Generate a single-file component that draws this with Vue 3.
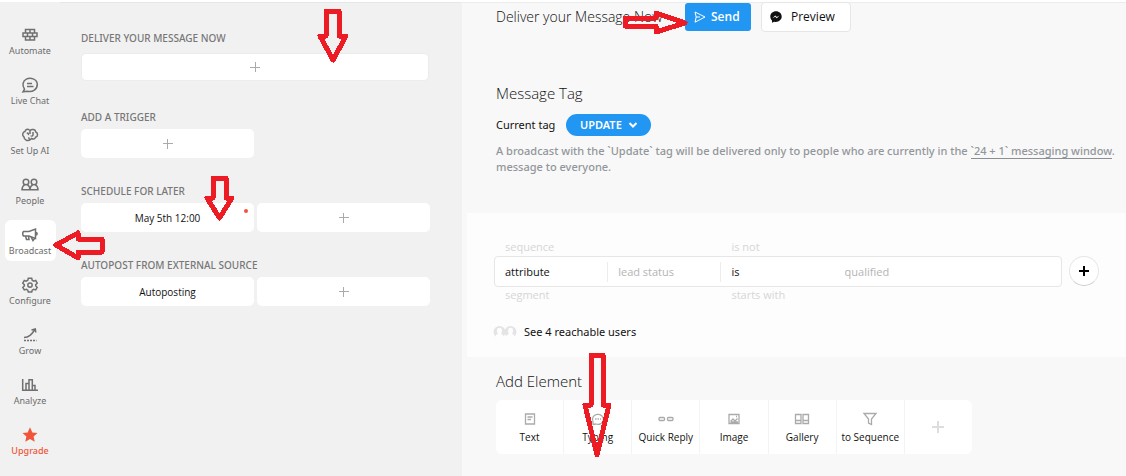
<script setup>
import { ref } from 'vue'

const nav = ['Automate', 'Live Chat', 'Set Up AI', 'People', 'Broadcast', 'Configure', 'Grow', 'Analyze', 'Upgrade']
const active = ref('Broadcast')
const elements = ['Text', 'Typing', 'Quick Reply', 'Image', 'Gallery', 'to Sequence']
const leadStatus = ref('')
const statusValue = ref('')
const arrows = [
  'M326 11H339V36H346L333 60L320 36H326Z',
  'M213 178H226V198H232L219.500 218L207 198H213Z',
  'M102 239V252H78V258L56 245L78 233V239Z',
  'M625 18H656V13L685 23L656 32V26H625Z',
  'M591 355H603V405H609L597 455L585 405H591Z'
]
</script>

<template>
  <div class="app">
    <nav class="sidebar">
      <a
        v-for="item in nav"
        :key="item"
        href="#"
        class="nav-item"
        :class="{ active: item === active, upgrade: item === 'Upgrade' }"
        @click.prevent="active = item"
      >
        <svg class="nav-icon" viewBox="0 0 18 18" aria-hidden="true">
          <g v-if="item === 'Automate'">
            <path d="M4.500 3.500H13.500V7H4.500ZM2 7H16V10.500H2ZM4.500 10.500H13.500V14H4.500ZM9 3.500V7M6.500 7V10.500M11.500 7V10.500M9 10.500V14" />
          </g>
          <g v-else-if="item === 'Live Chat'">
            <path d="M2 15.800L3.500 13.200C.8 9.500 1.800 5 5.300 3.200C9.500 1 15.800 3 16.300 8C16.500 13.500 11.500 16.500 6.500 15.300Z" /><path d="M6 7.500H11M6 10.500H12.500" />
          </g>
          <g v-else-if="item === 'Set Up AI'">
            <path d="M8.500 4C6.500 2.500 4.300 3.500 4 5.500C1.500 6 .8 9.500 3 11C3 14 7 15.800 9.500 13.500L10.500 12.500C12.500 13.800 14.500 12.500 14.500 11.300C17.300 10.500 17 6.800 14.800 6C14.500 3.500 11 2.500 9 4.500V8M5.800 7.500C7 6.500 8 7.800 7.200 9M12 6V9C12 10.500 10 10 10 9.500M9.500 13.500C8.500 13.500 7.500 12.500 8 11.300" />
          </g>
          <g v-else-if="item === 'People'">
            <circle cx="5" cy="6" r="2.8" /><circle cx="13" cy="6" r="2.8" />
            <path d="M3.800 8.600C1.800 9.800 1 11 1 13.800H9C9 11 8.200 9.800 6.200 8.600M11.800 8.600C9.800 9.800 9 11 9 13.800H17C17 11 16.200 9.800 14.200 8.600" />
          </g>
          <g v-else-if="item === 'Broadcast'">
            <path d="M2.500 5.500H8L14.500 3V12.500L8 10H2.500L1.800 9V6.500ZM4.500 10L5.500 13.500H8L7.500 10M15 6.500C16.500 6.500 16.500 9 15 9M10 10.800L12 14.500L13.500 12.500" />
          </g>
          <g v-else-if="item === 'Configure'">
            <path d="M7.300 2.200H10.700L11.200 4.200L12.800 5.100L14.700 4.500L16.200 7.200L14.700 8.600V10L16.200 11.300L14.700 13.900L12.700 13.300L11.200 14.200L10.700 16H7.300L6.800 14.200L5.300 13.300L3.300 13.900L1.800 11.300L3.300 10V8.600L1.800 7.200L3.300 4.500L5.200 5.100L6.800 4.200Z" /><circle cx="9" cy="9.100" r="2.200" />
          </g>
          <g v-else-if="item === 'Grow'">
            <path d="M3 11.500C8 11.500 10.500 8.500 14 3.500M10.500 4L14.300 3L14.800 6.500" /><path d="M3 14.500H15.500" stroke-dasharray="2 1" />
          </g>
          <g v-else-if="item === 'Analyze'">
            <path d="M1.700 3V14.300H17M5 14V7.500H8V14M8 14V3.700H11.300V14M11.300 9.500H14V14" />
          </g>
          <path v-else class="solid" d="M9 1.300L11.300 6.400L16.500 6.900L12.600 10.500L13.700 15.700L9 13L4.300 15.700L5.400 10.500L1.500 6.900L6.700 6.400Z" />
        </svg>
        <span>{{ item }}</span>
      </a>
    </nav>

    <aside class="panel">
      <section class="group first">
        <h2>DELIVER YOUR MESSAGE NOW</h2>
        <div class="tiles single">
          <button class="tile" aria-label="Add broadcast"><i class="plus"></i></button>
        </div>
      </section>
      <section class="group">
        <h2>ADD A TRIGGER</h2>
        <div class="tiles">
          <button class="tile" aria-label="Add trigger"><i class="plus"></i></button>
        </div>
      </section>
      <section class="group">
        <h2>SCHEDULE FOR LATER</h2>
        <div class="tiles">
          <button class="tile">May 5th 12:00<i class="dot"></i></button>
          <button class="tile" aria-label="Add schedule"><i class="plus"></i></button>
        </div>
      </section>
      <section class="group">
        <h2>AUTOPOST FROM EXTERNAL SOURCE</h2>
        <div class="tiles">
          <button class="tile">Autoposting</button>
          <button class="tile" aria-label="Add autopost"><i class="plus"></i></button>
        </div>
      </section>
    </aside>

    <main class="main">
      <header class="head">
        <h1>Deliver your Message Now</h1>
        <button class="send">
          <svg viewBox="0 0 12 12" aria-hidden="true"><path d="M1 1L11 6L1 11.200L2.200 6ZM2.200 6H6" /></svg>
          Send
        </button>
        <button class="preview">
          <svg viewBox="0 0 12 12" aria-hidden="true">
            <path fill="#111" d="M6 .3C2.700.3.3 2.600.3 5.600C.3 7.300 1 8.600 2 9.500V11.800L4.200 10.700C7.800 11.700 11.700 9.300 11.700 5.600C11.700 2.600 9.300.3 6 .3Z" />
            <path d="M2.500 7.200L5.200 4.500L6.800 6.100L9.500 4.500L6.800 7.300L5.200 5.800Z" fill="#fff" />
          </svg>
          Preview
        </button>
      </header>

      <section class="tag">
        <h1>Message Tag</h1>
        <div class="tag-row">
          <span id="tag-label">Current tag</span>
          <button class="pill" aria-describedby="tag-label">
            UPDATE
            <svg viewBox="0 0 10 8" aria-hidden="true"><path d="M1.500 2L5 5.500L8.500 2" /></svg>
          </button>
        </div>
        <p>A broadcast with the `Update` tag will be delivered only to people who are currently in the <a href="#">`24 + 1` messaging window</a>.<br />message to everyone.</p>
      </section>

      <section class="filter">
        <div class="wheel-row ghost">
          <span>sequence</span><span></span><span>is not</span>
        </div>
        <div class="rule">
          <div class="wheel-row box">
            <button class="cell">attribute</button>
            <input v-model="leadStatus" class="cell" placeholder="lead status" aria-label="Attribute name" />
            <button class="cell">is</button>
            <input v-model="statusValue" class="cell plain" placeholder="qualified" aria-label="Attribute value" />
          </div>
          <button class="add" aria-label="Add condition"><i class="plus"></i></button>
        </div>
        <div class="wheel-row ghost">
          <span>segment</span><span></span><span>starts with</span>
        </div>
        <a href="#" class="reach">
          <svg viewBox="0 0 24 14" aria-hidden="true">
            <g v-for="x in [0, 11]" :key="x" :transform="`translate(${x})`">
              <circle cx="6.500" cy="7" r="6" fill="#e4e4e4" />
              <path d="M4 5.500A2.500 2.800 0 0 1 9 5.500C9 7.500 8.500 8.500 8 9C10 9.700 11 10.600 11 13.500H2C2 10.600 3 9.700 5 9C4.500 8.500 4 7.500 4 5.500Z" fill="#fdfdfd" />
            </g>
          </svg>
          See 4 reachable users
        </a>
      </section>

      <section class="add-element">
        <h1>Add Element</h1>
        <div class="cards">
          <button v-for="name in elements" :key="name" class="card">
            <svg viewBox="0 0 16 14" aria-hidden="true">
              <path v-if="name === 'Text'" d="M3.500 2H12.500V12H3.500ZM5.500 5H10.500M5.500 7.500H9" />
              <g v-else-if="name === 'Typing'"><path d="M3 12.500V9.500A5.500 5 0 1 1 6 12Z" /><path d="M5 7H11" stroke-dasharray="1.500 1" /></g>
              <g v-else-if="name === 'Quick Reply'"><rect x="1" y="5.500" width="5.500" height="3" rx="1" /><rect x="9.500" y="5.500" width="5.500" height="3" rx="1" /></g>
              <path v-else-if="name === 'Image'" d="M3 2.500H13V11.500H3ZM4.500 9.500L7 7L9 9L11.500 6.500M4.500 10H12M10 4.500H11" />
              <path v-else-if="name === 'Gallery'" d="M1.500 2.500H7V11.500H1.500ZM1.500 8.500H7M9 2.500H14.500V11.500H9ZM9 8.500H14.500" />
              <path v-else d="M2 1.500H14L9.500 7V12.500L6.500 11V7Z" />
            </svg>
            <span>{{ name }}</span>
          </button>
          <button class="card" aria-label="More elements"><i class="plus"></i></button>
        </div>
      </section>
    </main>

    <svg class="annotations" aria-hidden="true">
      <path v-for="d in arrows" :key="d" :d="d" />
    </svg>
  </div>
</template>

<style>
body { margin: 0; background: #f8f8f8; }
</style>

<style scoped>
* { box-sizing: border-box; }
.app {
  position: relative;
  display: flex;
  min-height: 100vh;
  overflow: hidden;
  border-top: 2px solid #fff;
  background: #f8f8f8;
  color: #111;
  font: 12px/16px "Open Sans", "Noto Sans", sans-serif;
}
button, input { font: inherit; color: inherit; border: 0; padding: 0; margin: 0; background: none; }
button { cursor: pointer; }
a { color: inherit; text-decoration: none; }
h1, h2, p { margin: 0; }
h1 { font-size: 15px; line-height: 20px; font-weight: 300; white-space: nowrap; }

.sidebar {
  flex: 0 0 60px;
  display: flex;
  flex-direction: column;
  align-items: center;
  gap: 9px;
  padding-top: 18px;
  background: #f1f1f1;
}
.nav-item {
  display: flex;
  flex-direction: column;
  align-items: center;
  width: 51px;
  height: 41px;
  padding-top: 6px;
  border-radius: 6px;
  color: #6c6c6c;
  font: 9px/14px "Noto Sans", sans-serif;
  white-space: nowrap;
}
.nav-icon { width: 18px; height: 18px; fill: none; stroke: #707070; stroke-width: 1.5; }
.active { background: #fff; }
.upgrade { color: #f0553a; font-weight: 500; }
.solid { fill: #f0553a; stroke: none; }

.panel {
  flex: 0 0 401px;
  padding: 28px 31px 0 21px;
  border-top: 1px solid #e6e6e6;
  background: #f1f1f1;
}
.group { margin-bottom: 26px; }
.group.first { margin-bottom: 29px; }
h2 { margin-bottom: 5px; font: 500 10px/14px "Noto Sans", sans-serif; color: #777; }
.first h2 { margin-bottom: 8px; }
.tiles { display: grid; grid-template-columns: 1fr 1fr; gap: 3px; }
.single { grid-template-columns: 1fr; padding-right: 1px; }
.tile {
  position: relative;
  display: flex;
  align-items: center;
  justify-content: center;
  height: 29px;
  border-radius: 5px;
  background: #fff;
  font-size: 10px;
}
.single .tile { height: 28px; border: 1px solid #ececec; }
.dot { position: absolute; top: 6px; right: 6px; width: 4px; height: 4px; border-radius: 50%; background: #f0553a; }
.plus {
  width: 10px;
  height: 10px;
  background: linear-gradient(#aaa, #aaa) center / 10px 1px no-repeat, linear-gradient(#aaa, #aaa) center / 1px 10px no-repeat;
}

.main { flex: 1; min-width: 0; border-top: 1px solid #ececec; border-left: 1px solid #f1f1f1; }
.head { display: flex; align-items: center; height: 28px; padding-left: 34px; }
.head h1 { width: 189px; font-size: 14px; }
.send, .preview { display: flex; align-items: center; border-radius: 3px; height: 28px; }
.send { width: 66px; padding-left: 9px; gap: 5px; background: #2196f3; color: #fff; font-weight: 600; }
.send svg { width: 12px; height: 12px; fill: none; stroke: #fff; stroke-width: 1; }
.preview { width: 90px; height: 30px; margin-left: 10px; padding-left: 8px; gap: 9px; border: 1px solid #e6e6e6; border-radius: 4px; background: #fff; font-weight: 500; }
.preview svg { width: 12px; height: 12px; }

.tag { padding: 52px 0 0 34px; font: 11px/16px "Noto Sans", sans-serif; }
.tag h1 { font-family: "Open Sans", sans-serif; }
.tag-row { display: flex; align-items: center; gap: 11px; margin-top: 11px; height: 22px; }
.pill {
  display: flex;
  align-items: center;
  justify-content: center;
  gap: 6px;
  width: 85px;
  height: 22px;
  border-radius: 11px;
  background: #2196f3;
  color: #fff;
  font-weight: 600;
}
.pill svg { width: 10px; height: 8px; fill: none; stroke: #fff; stroke-width: 2; }
p { margin-top: 7px; color: #92969a; font-weight: 500; white-space: nowrap; }
p a { border-bottom: 1px solid #8b8f94; }

.filter { margin: 38px 0 0 5px; padding: 26px 0 17px 27px; background: #fdfdfd; }
.wheel-row { display: grid; grid-template-columns: repeat(5, 1fr); width: 568px; font-size: 11px; }
.ghost { padding: 0 1px; color: #d6d6d6; }
.ghost span { padding-left: 10px; }
.rule { display: flex; align-items: center; gap: 7px; }
.box { height: 31px; margin-top: 1px; align-items: center; border: 1px solid #e6e6e6; border-radius: 4px; background: #fff; }
.cell { min-width: 0; height: 20px; padding-left: 10px; text-align: left; border-right: 1px solid #ececec; outline: 0; }
.cell:nth-child(3), .plain { border-right: 0; }
.cell::placeholder { color: #b4b4b4; opacity: 1; }
.add { display: flex; align-items: center; justify-content: center; width: 30px; height: 30px; border: 1px solid #e6e6e6; border-bottom-color: #ccc; border-radius: 50%; background: #fff; }
.add .plus { background: linear-gradient(#000, #000) center / 10px 2px no-repeat, linear-gradient(#000, #000) center / 2px 10px no-repeat; }
.reach { display: flex; align-items: center; gap: 7px; margin-top: 21px; font: 11px/16px "Noto Sans", sans-serif; }
.reach svg { width: 24px; height: 14px; margin-left: -1px; }

.add-element { padding: 14px 0 0 34px; }
.cards { display: flex; width: 476px; margin-top: 9px; border-radius: 6px; overflow: hidden; background: #fff; }
.card { flex: 1 1 0; min-width: 0; display: flex; flex-direction: column; align-items: center; justify-content: center; gap: 4px; height: 54px; border-left: 1px solid #f3f3f3; font-size: 10px; line-height: 14px; white-space: nowrap; }
.card:first-child { border-left: 0; }
.card svg { width: 16px; height: 14px; margin-top: 2px; fill: none; stroke: #aaa; stroke-width: 1.3; }
.card .plus { width: 12px; height: 12px; background: linear-gradient(#ddd, #ddd) center / 12px 2px no-repeat, linear-gradient(#ddd, #ddd) center / 2px 12px no-repeat; }

.annotations { position: absolute; top: -2px; left: 0; width: 100%; height: 476px; pointer-events: none; fill: none; stroke: #ed1c24; stroke-width: 5; stroke-linejoin: round; shape-rendering: crispEdges; }
</style>
